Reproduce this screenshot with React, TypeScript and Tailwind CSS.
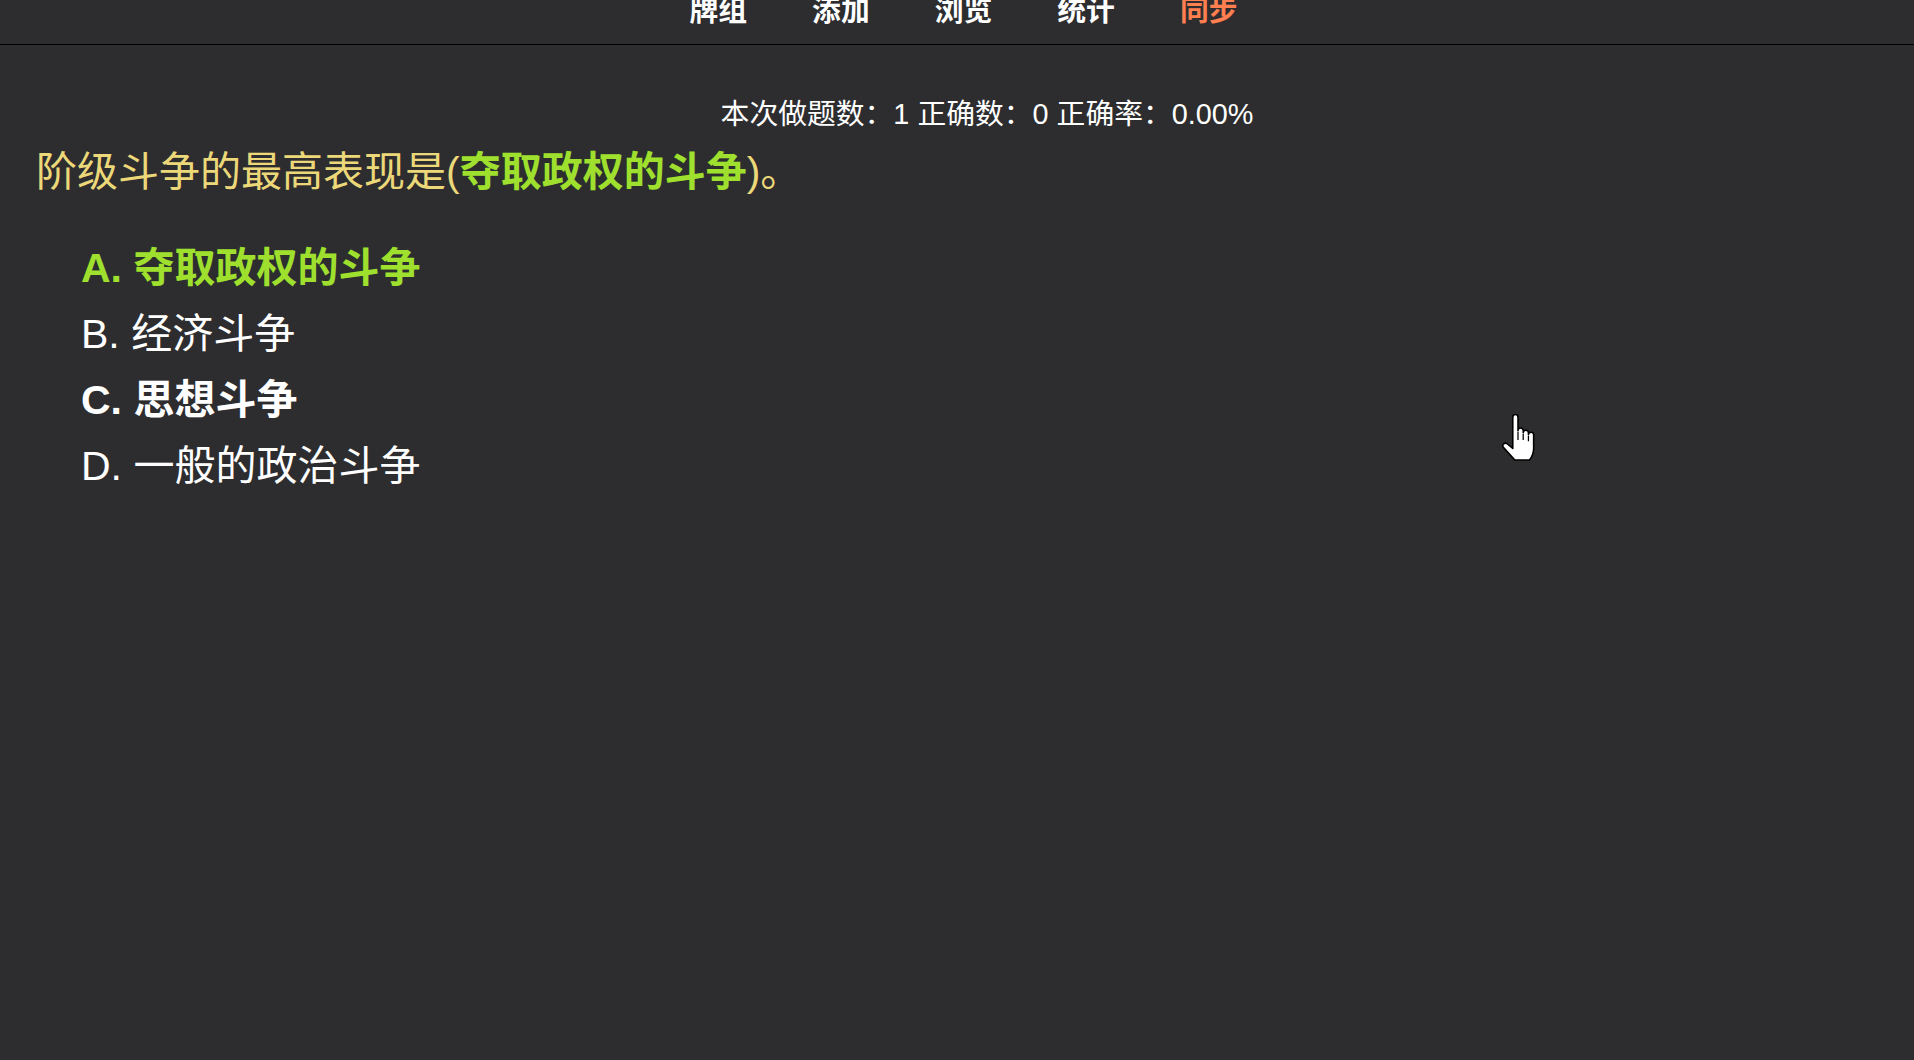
const FONT = "font-['Liberation_Sans','Noto_Sans_CJK_SC',sans-serif]";

const navItems = [
  { label: "牌组", active: false },
  { label: "添加", active: false },
  { label: "浏览", active: false },
  { label: "统计", active: false },
  { label: "同步", active: true },
];

const options = [
  { key: "A", text: "夺取政权的斗争", tone: "correct" },
  { key: "B", text: "经济斗争", tone: "plain" },
  { key: "C", text: "思想斗争", tone: "picked" },
  { key: "D", text: "一般的政治斗争", tone: "plain" },
];

function HandCursor() {
  // the pointer that was on screen when the shot was taken
  return (
    <svg
      viewBox="0 0 34 46"
      className="pointer-events-none absolute left-[1500px] top-[414px] h-[48px] w-[36px]"
    >
      <path
        d="M12 3a2.5 2.5 0 0 1 5 0V16a2.5 2.5 0 0 1 5 0V18a2.5 2.5 0 0 1 5 0V20a2.5 2.5 0 0 1 5 0V33q0 6-4 11H14L3 32a2.5 2.5 0 0 1 3.5-3.5L12 33Z"
        fill="#fff"
        stroke="#000"
        strokeWidth="1.5"
        strokeLinejoin="round"
      />
      <path d="M17 17V25M22 19V25M27 21V26" stroke="#000" strokeWidth="1.2" />
    </svg>
  );
}

export default function App() {
  return (
    <div className={`relative min-h-[1060px] w-full bg-[#2d2d30] text-white ${FONT}`}>
      <nav className="h-[45px] border-b border-black">
        <ul className="flex justify-center gap-[65px] pl-[13px]">
          {navItems.map((item) => (
            <li
              key={item.label}
              className={`text-[28.8px] font-bold leading-[22px] ${item.active ? "text-[#ff7f50]" : "text-white"}`}
            >
              {item.label}
            </li>
          ))}
        </ul>
      </nav>

      <main className="pl-[36px] pt-[49px]">
        <p className="pl-[24px] text-center text-[28.8px] leading-[40px]">
          本次做题数：1 正确数：0 正确率：0.00%
        </p>

        <h2 className="mt-[10px] text-[41px] leading-[56px] text-[#ecd878]">
          阶级斗争的最高表现是(<b className="font-bold text-[#9ee02d]">夺取政权的斗争</b>)。
        </h2>

        <ul className="mt-[35px] pl-[45px]">
          {options.map((opt) => (
            <li
              key={opt.key}
              className={`text-[41px] leading-[66px] ${
                opt.tone === "correct"
                  ? "font-bold text-[#9ee02d]"
                  : opt.tone === "picked"
                    ? "font-bold text-white"
                    : "font-normal text-white"
              }`}
            >
              {opt.key}. {opt.text}
            </li>
          ))}
        </ul>
      </main>

      <HandCursor />
    </div>
  );
}
